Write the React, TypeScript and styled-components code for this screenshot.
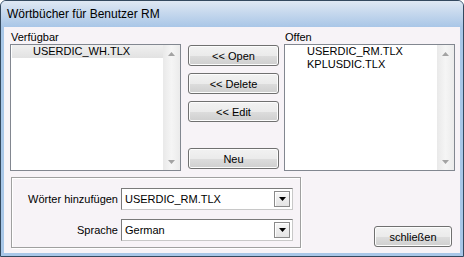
import styled, { createGlobalStyle } from 'styled-components'

const GlobalStyle = createGlobalStyle`
  html, body {
    margin: 0;
    padding: 0;
    background: #ffffff;
  }
  body {
    font-family: "Liberation Sans", Arial, sans-serif;
    font-size: 11px;
    color: #000;
  }
`

const available = ['USERDIC_WH.TLX']
const opened = ['USERDIC_RM.TLX', 'KPLUSDIC.TLX']

const ArrowUp = () => (
  <svg width="7" height="4" viewBox="0 0 7 4">
    <path d="M3.5 0 L7 4 L0 4 Z" fill="#a3a3a3" />
  </svg>
)

const ArrowDown = ({ color = '#a3a3a3' }: { color?: string }) => (
  <svg width="7" height="4" viewBox="0 0 7 4">
    <path d="M0 0 L7 0 L3.5 4 Z" fill={color} />
  </svg>
)

const ListBox = ({ items, selected }: { items: string[]; selected?: number }) => (
  <S_List>
    <S_ListItems>
      {items.map((item, i) => (
        <S_Item key={item} $selected={i === selected}>
          {item}
        </S_Item>
      ))}
    </S_ListItems>
    <S_Scrollbar>
      <S_ScrollButton>
        <ArrowUp />
      </S_ScrollButton>
      <S_Track />
      <S_ScrollButton>
        <ArrowDown />
      </S_ScrollButton>
    </S_Scrollbar>
  </S_List>
)

const Combo = ({ value }: { value: string }) => (
  <S_Combo>
    <S_ComboValue>{value}</S_ComboValue>
    <S_ComboButton>
      <ArrowDown color="#000" />
    </S_ComboButton>
  </S_Combo>
)

const App = () => {
  return (
    <>
      <GlobalStyle />
      <S_Window>
        <S_TitleBar>Wörtbücher für Benutzer RM</S_TitleBar>
        <S_Client>
          <S_TopRow>
            <S_Column>
              <S_Label>Verfügbar</S_Label>
              <ListBox items={available} selected={0} />
            </S_Column>
            <S_Buttons>
              <S_Button>&lt;&lt; Open</S_Button>
              <S_Button>&lt;&lt; Delete</S_Button>
              <S_Button>&lt;&lt; Edit</S_Button>
              <S_Button $gap={26}>Neu</S_Button>
            </S_Buttons>
            <S_Column>
              <S_Label>Offen</S_Label>
              <ListBox items={opened} />
            </S_Column>
          </S_TopRow>
          <S_BottomRow>
            <S_Group>
              <S_FieldLabel>Wörter hinzufügen</S_FieldLabel>
              <Combo value="USERDIC_RM.TLX" />
              <S_FieldLabel>Sprache</S_FieldLabel>
              <Combo value="German" />
            </S_Group>
            <S_CloseButton>schließen</S_CloseButton>
          </S_BottomRow>
        </S_Client>
      </S_Window>
    </>
  )
}

export default App

const S_Window = styled.div`
  width: 464px;
  height: 257px;
  box-sizing: border-box;
  display: flex;
  flex-direction: column;
  background: #a9c7e8;
  border: 1px solid #34495f;
  border-radius: 6px 6px 0 0;
  padding: 0 3px 3px 3px;
  overflow: hidden;
`

const S_TitleBar = styled.div`
  height: 26px;
  flex: none;
  display: flex;
  align-items: center;
  padding-left: 6px;
  margin: 0 -3px;
  font-size: 12px;
  background: linear-gradient(to bottom, #dfe8f3 0%, #c9daee 40%, #a9c6e7 100%);
  color: #000;
`

const S_Client = styled.div`
  flex: 1;
  display: flex;
  flex-direction: column;
  background: #f7f3f7;
  padding: 4px 5px 0 6px;
  border: 0;
`

const S_TopRow = styled.div`
  display: flex;
  align-items: flex-start;
`

const S_Column = styled.div`
  display: flex;
  flex-direction: column;
  width: 171px;
`

const S_Label = styled.div`
  height: 13px;
  line-height: 13px;
  padding-left: 1px;
`

const S_List = styled.div`
  height: 127px;
  box-sizing: border-box;
  border: 1px solid #828790;
  background: #fff;
  display: flex;
`

const S_ListItems = styled.div`
  flex: 1;
  padding-left: 1px;
`

const S_Item = styled.div<{ $selected?: boolean }>`
  height: 13px;
  line-height: 13px;
  padding-left: 21px;
  background: ${p => (p.$selected ? 'linear-gradient(to bottom, #f0f0f0, #e2e2e2)' : 'transparent')};
`

const S_Scrollbar = styled.div`
  width: 17px;
  display: flex;
  flex-direction: column;
  background: linear-gradient(to right, #e9e9e9, #f5f5f5 50%, #ebebeb);
`

const S_ScrollButton = styled.div`
  height: 17px;
  display: flex;
  align-items: center;
  justify-content: center;
`

const S_Track = styled.div`
  flex: 1;
`

const S_Buttons = styled.div`
  width: 91px;
  margin: 14px 5px 0 7px;
  display: flex;
  flex-direction: column;
  gap: 7px;
`

const S_Button = styled.div<{ $gap?: number }>`
  height: 21px;
  box-sizing: border-box;
  border: 1px solid #707070;
  border-radius: 3px;
  background: linear-gradient(to bottom, #f2f2f2 0%, #ebebeb 50%, #dddddd 51%, #cfcfcf 100%);
  box-shadow: inset 0 0 0 1px #fcfcfc;
  display: flex;
  align-items: center;
  justify-content: center;
  margin-top: ${p => (p.$gap ? `${p.$gap - 7}px` : '0')};
`

const S_BottomRow = styled.div`
  display: flex;
  align-items: flex-end;
  margin-top: 6px;
`

const S_Group = styled.div`
  width: 290px;
  height: 71px;
  box-sizing: border-box;
  margin-left: 1px;
  border: 1px solid #a0a0a0;
  box-shadow: inset 1px 1px 0 #fff, 1px 1px 0 #fff;
  display: grid;
  grid-template-columns: 106px 172px;
  column-gap: 3px;
  row-gap: 9px;
  align-content: start;
  align-items: center;
  padding-top: 10px;
`

const S_FieldLabel = styled.div`
  text-align: right;
`

const S_Combo = styled.div`
  height: 22px;
  box-sizing: border-box;
  border: 1px solid #7a7a7a;
  border-right-color: #c8c8c8;
  border-bottom-color: #c8c8c8;
  background: #fff;
  display: flex;
  align-items: center;
  padding: 0 2px 0 2px;
`

const S_ComboValue = styled.div`
  flex: 1;
  padding-left: 1px;
`

const S_ComboButton = styled.div`
  width: 16px;
  height: 16px;
  box-sizing: border-box;
  border: 1px solid #8a8a8a;
  background: linear-gradient(to bottom, #f7f7f7, #e4e4e4);
  box-shadow: inset 1px 1px 0 #fff;
  display: flex;
  align-items: center;
  justify-content: center;
`

const S_CloseButton = styled(S_Button)`
  width: 78px;
  margin: 0 3px 1px auto;
  height: 21px;
`
